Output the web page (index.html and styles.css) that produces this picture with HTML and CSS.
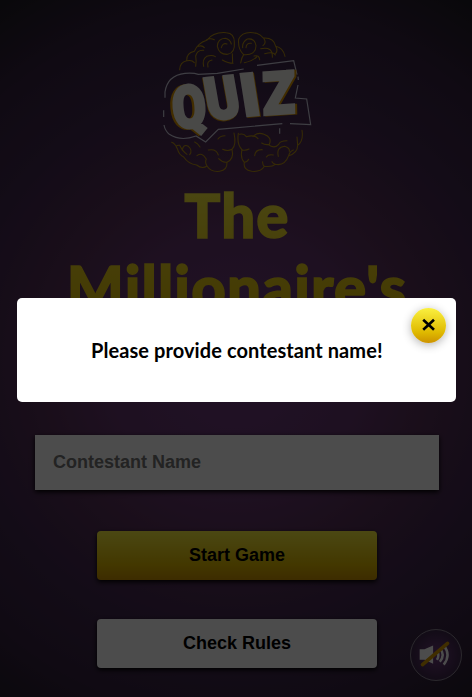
FILE: index.html
```html
<!DOCTYPE html>
<html lang="en">
<head>
<meta charset="utf-8">
<title>The Millionaire's Quiz</title>
<link rel="stylesheet" href="styles.css">
</head>
<body>
<main class="home">
  <svg class="logo" viewBox="0 0 525 480" role="img" aria-label="Quiz">
    <g class="brain">
      <path d="M89 149Q90 126 110 122Q109 99 133 94Q143 70 170 61Q190 35 229 38Q253 39 253 67Q256 98 233 103Q207 104 202 79Q203 56 226 55Q240 58 244 72M112 122Q126 119 133 128M137 139Q140 124 137 108Q142 89 161 91M161 139Q156 118 170 109Q186 103 196 110M169 60Q180 53 193 59M248 128L247 101M217 120Q235 130 249 130M145 79Q157 75 163 83M174 141Q169 123 186 120M214 83Q218 67 231 72"/>
      <path d="M272 129Q275 112 281 104Q263 88 266 58Q278 31 320 40Q332 44 340 54Q372 52 377 79Q399 83 405 109M281 104Q317 107 318 77Q315 54 292 57Q276 66 278 83M288 83Q289 68 304 70M342 56Q350 69 339 77M332 86Q369 78 367 112M344 101Q372 94 376 105M283 128Q306 124 320 111M312 108Q328 104 329 119M378 80Q384 93 377 100"/>
      <path d="M65 367Q75 370 82 386Q87 405 101 411Q115 432 140 435Q156 448 171 438Q183 457 209 454Q232 451 231 427Q253 416 246 388Q260 375 252 339M82 386Q73 375 89 376Q98 395 111 403M97 391Q99 371 115 379Q129 391 119 404M134 366Q143 370 150 381M141 407Q157 396 167 415M175 390Q199 385 205 405M171 438Q164 427 169 417M206 416Q218 429 232 426M218 388Q233 395 246 388M204 357Q210 347 225 347"/>
      <path d="M265 340Q260 373 276 389Q270 414 283 427Q279 450 305 454Q333 457 343 439Q366 442 376 433Q404 439 416 407Q443 400 443 376Q461 364 456 331M443 376L441 351M269 343Q281 339 289 350Q314 343 324 356M309 350Q322 335 342 343Q367 352 358 373Q346 376 335 369M355 374Q373 388 386 373Q390 362 411 362M275 389Q286 393 297 387M283 427Q291 427 296 418M314 407Q316 388 337 389M349 411Q355 402 370 405M385 409Q378 382 404 379Q420 384 418 394M376 433Q369 431 366 425M343 439Q337 433 338 425M416 407Q419 394 430 390"/>
    </g>
    <path class="frame" d="M45 233V216Q52 166 105 160Q131 158 145 163L202 160L281 147M321 136L431 122L441 164M444 170L445 180M444 195L436 234L470 237L482 314L420 311M397 311L205 328L167 366L138 348Q91 365 58 343Q45 332 42 315M41 291V271M389 325V341"/>
    <g class="letters back">
      <text transform="translate(65 328) rotate(-5) scale(.83 1)">Q</text>
      <text transform="translate(175 303) rotate(-6) skewX(4) scale(.87 1)">U</text>
      <text transform="translate(284 290) rotate(-5) skewX(4) scale(1.04 1)">I</text>
      <text transform="translate(345 286) rotate(-4) skewX(-3) scale(.9 1)">Z</text>
    </g>
    <g class="letters">
      <text transform="translate(72 326) rotate(-5) scale(.83 1)">Q</text>
      <text transform="translate(176 300) rotate(-6) skewX(4) scale(.87 1)">U</text>
      <text transform="translate(281 288) rotate(-5) skewX(4) scale(1.04 1)">I</text>
      <text transform="translate(339 284) rotate(-4) skewX(-3) scale(.9 1)">Z</text>
    </g>
  </svg>
  <h1 class="title">The Millionaire's</h1>
  <input class="name" type="text" placeholder="Contestant Name" aria-label="Contestant Name">
  <button class="btn gold">Start Game</button>
  <button class="btn">Check Rules</button>
</main>
<button class="sound" aria-label="Sound">
  <svg viewBox="0 0 52 52">
    <path d="M9 20H14L23 16V35L14 31H9Z" fill="#fff"/>
    <path d="M27 22Q30 26 27 31M30 19Q36 26 30 33M34 16Q42 26 34 36" fill="none" stroke="#fff" stroke-width="2.6"/>
    <path d="M12 36L38 14" stroke="#d79b00" stroke-width="3.8" stroke-linecap="round"/>
  </svg>
</button>
<div class="overlay">
  <div class="dialog" role="dialog">
    <p class="message">Please provide contestant name!</p>
    <button class="close" aria-label="Close">
      <svg viewBox="0 0 35 35"><path d="M12.2 11.7L23 21.7M23 11.7L12.2 21.7" stroke="#000" stroke-width="2.6"/></svg>
    </button>
  </div>
</div>
</body>
</html>
```

FILE: styles.css
```css
* { box-sizing: border-box; }
html, body { height: 100%; margin: 0; }
body {
  overflow: hidden;
  font-family: Lato, sans-serif;
  background: radial-gradient(circle at 50% 52%, #713c82 0%, #65376e 30%, #573058 45%, #42294f 63%, #362340 82%, #1f1c24 100%);
}
.home {
  display: flex;
  flex-direction: column;
  align-items: center;
  width: 474px;
  padding-top: 20px;
}
.logo { width: 175px; height: 160px; margin-bottom: -1px; }
.brain { fill: none; stroke: #b58e13; stroke-width: 3.2; stroke-linejoin: round; stroke-linecap: round; }
.frame { fill: none; stroke: #d0cfe0; stroke-width: 3.5; }
.letters { font-family: Roboto, sans-serif; font-weight: 900; font-size: 176px; fill: #f4f4ee; stroke: #f4f4ee; stroke-width: 9; }
.back { fill: #dc9600; stroke: #dc9600; }
.title {
  width: 404px;
  height: 216px;
  margin: 0 0 40px;
  padding: 0 20px;
  text-align: center;
  font-size: 60px;
  font-weight: 900;
  line-height: 72px;
  letter-spacing: 1.2px;
  color: transparent;
  -webkit-text-stroke: 1.5px transparent;
  background: linear-gradient(#faef40, #dfb900 70%, #cc9200);
  -webkit-background-clip: text;
  background-clip: text;
}
.name {
  width: 404px;
  height: 55px;
  margin-bottom: 41px;
  padding: 0 18px;
  border: 0;
  font: bold 18px "Liberation Sans", sans-serif;
  background: #fff;
  box-shadow: 0 2px 5px #000;
}
.name::placeholder { color: #757575; }
.btn {
  width: 280px;
  height: 49px;
  margin-bottom: 39px;
  border: 0;
  border-radius: 4px;
  font: bold 18px "Liberation Sans", sans-serif;
  color: #000;
  background: #fff;
  box-shadow: 0 2px 5px #000;
}
.gold { background: linear-gradient(#faf040, #dfb900 70%, #cc9200); }
.sound {
  position: fixed;
  right: 10px;
  bottom: 16px;
  width: 52px;
  height: 52px;
  padding: 0;
  border: 1px solid #8f8796;
  border-radius: 50%;
  background: radial-gradient(circle, #713c82, #42294f 65%);
}
.sound svg { display: block; width: 50px; height: 50px; }
.overlay {
  position: fixed;
  inset: 0 -2px 0 0;
  display: flex;
  align-items: center;
  justify-content: center;
  padding-top: 3px;
  background: rgba(0, 0, 0, .7);
}
.dialog {
  position: relative;
  display: flex;
  align-items: center;
  justify-content: center;
  width: 439px;
  height: 104px;
  margin-right: .4px;
  border-radius: 5px;
  background: #fff;
}
.message { margin: 0; font-size: 20px; font-weight: 700; line-height: 24px; letter-spacing: .08px; }
.close {
  position: absolute;
  top: 10px;
  right: 10px;
  width: 35px;
  height: 35px;
  padding: 0;
  border: 0;
  border-radius: 50%;
  background: linear-gradient(#faf040, #dfb900 70%, #cc9200);
  box-shadow: 0 2px 10px rgba(0, 0, 0, .3);
}
.close svg { display: block; width: 35px; height: 35px; }
```
